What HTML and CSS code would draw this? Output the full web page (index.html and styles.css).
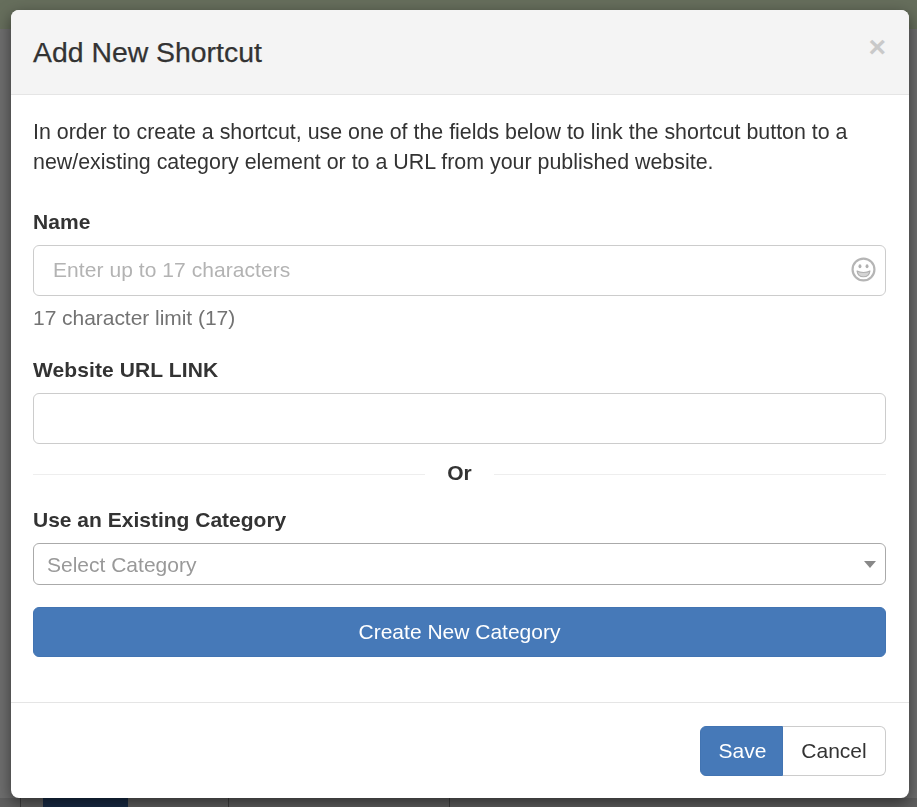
FILE: index.html
```html
<!DOCTYPE html>
<html lang="en">
<head>
<meta charset="utf-8">
<title>Add New Shortcut</title>
<link rel="stylesheet" href="styles.css">
</head>
<body>
<div class="page">
  <div class="topbar"></div>
  <div class="page-main"></div>
  <div class="page-bottom">
    <div class="cell cell-a"></div>
    <div class="cell cell-navy"></div>
    <div class="cell cell-b"></div>
    <div class="cell cell-c"></div>
    <div class="cell cell-d"></div>
  </div>
</div>
<div class="overlay">
  <div class="modal">
    <header class="modal-header">
      <h4 class="modal-title">Add New Shortcut</h4>
      <span class="close">×</span>
    </header>
    <div class="modal-body">
      <p class="intro">In order to create a shortcut, use one of the fields below to link the shortcut button to a new/existing category element or to a URL from your published website.</p>
      <div class="group">
        <label class="label">Name</label>
        <div class="input-wrap">
          <input class="input input-name" type="text" placeholder="Enter up to 17 characters">
          <svg class="smile" viewBox="0 0 24 24" width="25" height="25" aria-hidden="true">
            <circle cx="12" cy="12" r="10.5" fill="none" stroke="#b5b5b5" stroke-width="2.1"/>
            <ellipse cx="8.6" cy="8.8" rx="1.4" ry="1.9" fill="#b0b0b0"/>
            <ellipse cx="15.4" cy="8.8" rx="1.4" ry="1.9" fill="#b0b0b0"/>
            <path d="M5.8 13.4c1.6 1 3.7 1.5 6.2 1.5s4.6-.5 6.2-1.5c-.5 3.5-3 5.6-6.2 5.6s-5.7-2.1-6.2-5.6z" fill="#d4d4d4" stroke="#b0b0b0" stroke-width="1.1" stroke-linejoin="round"/>
          </svg>
        </div>
        <div class="help">17 character limit (17)</div>
      </div>
      <div class="group group-url">
        <label class="label">Website URL LINK</label>
        <input class="input" type="text">
      </div>
      <div class="divider"><span class="divider-text">Or</span></div>
      <div class="group group-cat">
        <label class="label">Use an Existing Category</label>
        <div class="select">
          <span class="select-value">Select Category</span>
          <span class="caret"></span>
        </div>
      </div>
      <button class="btn btn-primary btn-block" type="button">Create New Category</button>
    </div>
    <footer class="modal-footer">
      <div class="btn-group">
        <button class="btn btn-primary btn-save" type="button">Save</button>
        <button class="btn btn-default" type="button">Cancel</button>
      </div>
    </footer>
  </div>
</div>
</body>
</html>
```
FILE: styles.css
```css
* { box-sizing: border-box; }
html, body { margin: 0; height: 100%; overflow: hidden; }
body {
  font-family: "Liberation Sans", Arial, sans-serif;
  font-size: 21px;
  line-height: 30px;
  color: #333;
  background: #6b6b6b;
}
.page { height: 807px; display: flex; flex-direction: column; }
.topbar { height: 29px; background: #666e5c; }
.page-main { flex: 1; background: #6e6e6e; }
.page-bottom { height: 9px; display: flex; background: #5f5f5f; }
.cell { border-right: 1px solid #3d3d3d; }
.cell-a { width: 21px; }
.cell-navy { width: 85px; margin-left: 22px; background: #182b45; border: 0; }
.cell-b { width: 101px; }
.cell-c { width: 221px; }
.cell-d { flex: 1; border: 0; }
.overlay {
  position: fixed;
  inset: 0;
  padding: 10px 8px 0 11px;
}
.modal {
  height: 788px;
  background: #fff;
  border-radius: 8px;
  box-shadow: 0 5px 15px rgba(0, 0, 0, .5);
  display: flex;
  flex-direction: column;
  overflow: hidden;
}
.modal-header {
  height: 85px;
  flex: none;
  background: #f4f4f4;
  border-bottom: 1px solid #e5e5e5;
  padding: 0 22px;
  display: flex;
  align-items: center;
  justify-content: space-between;
}
.modal-title {
  margin: 0;
  font-size: 28.4px;
  font-weight: 400;
  line-height: 34px;
  color: #333;
  -webkit-text-stroke: .25px #333;
}
.close {
  font-size: 30px;
  font-weight: 700;
  line-height: 1;
  color: #c9c9c9;
  margin: 0 1px 10px 0;
}
.modal-body { flex: 1; padding: 22px 23px 0 22px; }
.intro { margin: 0 0 30px; font-size: 21.4px; }
.group { margin: 0; }
.label { display: block; font-weight: 700; line-height: 30px; margin-bottom: 8px; letter-spacing: .1px; }
.group-cat .label { letter-spacing: 0; }
.input-wrap { position: relative; }
.input {
  display: block;
  width: 100%;
  height: 51px;
  padding: 0 19px 2px;
  font: inherit;
  color: #333;
  background: #fff;
  border: 1px solid #ccc;
  border-radius: 6px;
  outline: 0;
}
.input::placeholder { color: #b3b3b3; opacity: 1; letter-spacing: .06px; }
.smile { position: absolute; right: 10px; top: 12px; }
.help { margin-top: 7px; color: #737373; letter-spacing: -.04px; }
.group-url { margin-top: 22px; }
.divider {
  margin: 15px 0 16px;
  height: 30px;
  display: flex;
  align-items: center;
  gap: 22px;
  font-weight: 700;
}
.divider-text { position: relative; top: -1px; }
.divider::before, .divider::after {
  content: "";
  flex: 1;
  height: 1px;
  background: #eee;
}
.select {
  height: 42px;
  padding: 0 13px;
  display: flex;
  align-items: center;
  justify-content: space-between;
  color: #999;
  background: #fff;
  border: 1px solid #aaa;
  border-radius: 6px;
}
.select-value { position: relative; top: 1px; }
.caret {
  width: 0;
  height: 0;
  border-left: 6px solid transparent;
  border-right: 6px solid transparent;
  border-top: 7px solid #888;
  margin-right: -4px;
}
.btn {
  display: inline-block;
  height: 50px;
  padding: 0 18px;
  font: inherit;
  border: 1px solid transparent;
  border-radius: 6px;
}
.btn-primary { color: #fff; background: #4679b8; border-color: #4274b2; }
.btn-block { display: block; width: 100%; margin-top: 22px; }
.modal-footer {
  height: 96px;
  flex: none;
  border-top: 1px solid #e5e5e5;
  padding: 23px 23px 0 0;
  display: flex;
  justify-content: flex-end;
}
.btn-group { display: flex; height: 50px; }
.btn-save { border-radius: 6px 0 0 6px; width: 83px; padding: 0 0 0 2px; }
.btn-default {
  color: #333;
  background: #fff;
  border-color: #ccc;
  border-left: 0;
  border-radius: 0 6px 6px 0;
  width: 103px;
  padding: 0;
}
```
